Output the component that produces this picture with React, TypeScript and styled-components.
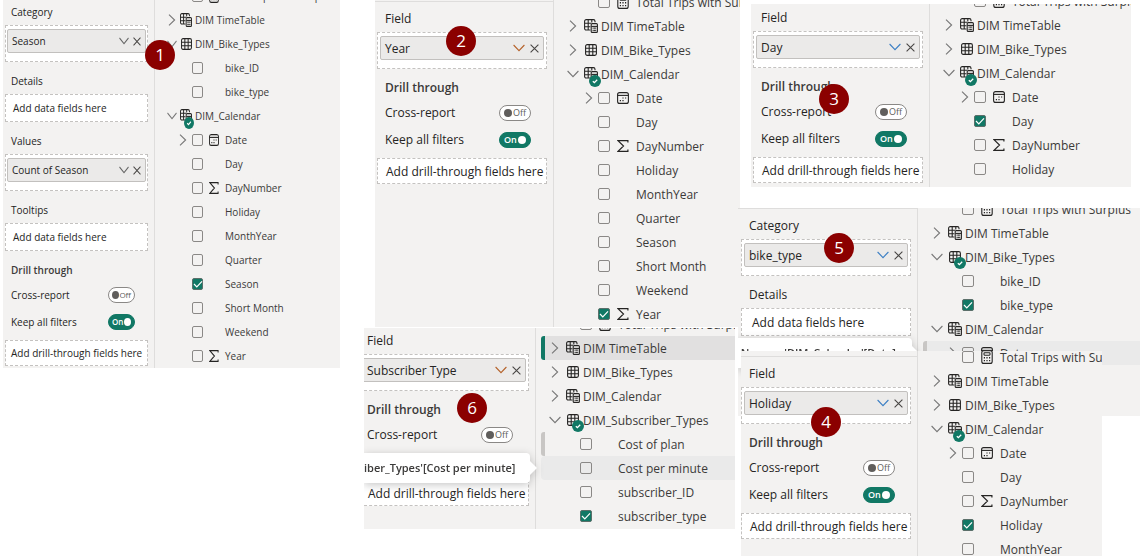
import React, { useId, useState } from "react";
import styled, { createGlobalStyle, css } from "styled-components";

const GlobalStyle = createGlobalStyle`
  * { box-sizing: border-box; }
  body { margin: 0; background: #fff; overflow: hidden; }
  input, button { font: inherit; margin: 0; padding: 0; }
`;

const ink = "#252423";
const green = "#117865";
const sans = `"Open Sans", "Noto Sans", sans-serif`;

/* ---------- board ---------- */

const Board = styled.main`
  position: relative;
  min-height: 100vh;
  overflow: hidden;
  font-family: ${sans};
  color: ${ink};
`;

const Snippet = styled.section<{ $x: number; $y: number; $w: number; $h: number; $compact?: boolean }>`
  position: absolute;
  left: ${(p) => p.$x}px;
  top: ${(p) => p.$y}px;
  width: ${(p) => p.$w}px;
  height: ${(p) => p.$h}px;
  display: flex;
  overflow: hidden;
  background: #f3f2f1;
  font-size: ${(p) => (p.$compact ? 10 : 12)}px;
`;

const Backing = styled.div`
  position: absolute;
  left: 364px;
  top: 327px;
  width: 374px;
  height: 202px;
  background: #fff;
`;

const Badge = styled.span<{ $x: number; $y: number }>`
  position: absolute;
  left: ${(p) => p.$x}px;
  top: ${(p) => p.$y}px;
  width: 30px;
  height: 30px;
  border-radius: 50%;
  background: #8b0000;
  color: #fff;
  font: 17px/29px ${sans};
  text-align: center;
`;

/* ---------- wells pane ---------- */

const WellsPane = styled.div<{ $w: number }>`
  flex: none;
  display: flex;
  justify-content: flex-end;
  align-items: flex-start;
  width: ${(p) => p.$w}px;
  overflow: hidden;
  border-right: 1px solid #dedddc;
`;

const Wells = styled.div<{ $shift: number; $compact?: boolean }>`
  flex: none;
  width: ${(p) => (p.$compact ? 151 : 179)}px;
  margin-top: ${(p) => p.$shift}px;
  padding: 7px 6px 0 ${(p) => (p.$compact ? 2 : 3)}px;
  border-top: 1px solid #dedddc;
`;

const Group = styled.div`
  margin-bottom: 9px;
`;

const Heading = styled.h3<{ $strong?: boolean; $compact?: boolean }>`
  margin: 0 0 ${(p) => (p.$strong ? 1 : 3)}px;
  padding-left: ${(p) => (p.$compact ? 6 : 8)}px;
  font-size: inherit;
  line-height: 20px;
  font-weight: ${(p) => (p.$strong ? 600 : 400)};
  color: ${(p) => (p.$strong ? "#3b3a39" : ink)};
`;

const DropZone = styled.div<{ $kind: "filled" | "data" | "drill"; $compact?: boolean }>`
  height: ${(p) => ({ filled: 37, data: 28, drill: 26 })[p.$kind]}px;
  border: 1px dashed #c4c2c0;
  background: #fff;
  white-space: nowrap;
  ${(p) =>
    p.$kind === "filled"
      ? css`
          padding: 3px ${p.$compact ? 1 : 2}px;
        `
      : css`
          padding-left: ${p.$kind === "data" ? (p.$compact ? 7 : 10) : p.$compact ? 5 : 8}px;
          line-height: ${(p.$kind === "data" ? 28 : 26) - (p.$compact ? 2 : 0)}px;
        `}
`;

const Chip = styled.div`
  display: flex;
  align-items: center;
  height: 24px;
  padding: 0 2px 0 4px;
  border: 1px solid #c2c0be;
  border-radius: 2px;
  background: #ebeae9;
`;

const ChipName = styled.span`
  flex: 1;
`;

const IconButton = styled.button<{ $w: number }>`
  display: grid;
  place-items: center;
  width: ${(p) => p.$w}px;
  height: 20px;
  border: 0;
  background: none;
  color: #555;
`;

const ToggleRow = styled.label<{ $compact?: boolean }>`
  display: flex;
  align-items: center;
  justify-content: space-between;
  height: 27px;
  padding: 0 ${(p) => (p.$compact ? 13 : 16)}px 0 ${(p) => (p.$compact ? 6 : 8)}px;
`;

const Track = styled.span<{ $on: boolean; $compact?: boolean }>`
  display: flex;
  flex-direction: ${(p) => (p.$on ? "row-reverse" : "row")};
  align-items: center;
  justify-content: space-between;
  width: ${(p) => (p.$compact ? 27 : 32)}px;
  height: 16px;
  padding: 0 ${(p) => (p.$compact ? 3 : 4)}px;
  border: 1px solid ${(p) => (p.$on ? green : "#8a8886")};
  border-radius: 8px;
  background: ${(p) => (p.$on ? green : "#fff")};
  color: ${(p) => (p.$on ? "#fff" : "#605e5c")};
  font-size: ${(p) => (p.$compact ? 8 : 9)}px;
  font-weight: ${(p) => (p.$on ? 600 : 400)};
  line-height: 14px;
`;

const Knob = styled.input<{ $compact?: boolean }>`
  appearance: none;
  width: ${(p) => (p.$compact ? 7 : 8)}px;
  height: 8px;
  border-radius: 50%;
  background: #605e5c;
  &:checked { background: #fff; }
`;

const DrillGap = styled.div`
  padding-top: 5px;
`;

/* ---------- field tree ---------- */

const Tree = styled.ul<{ $shift: number }>`
  flex: 1;
  min-width: 0;
  margin: ${(p) => p.$shift}px 0 0;
  padding: 0 0 0 5px;
  list-style: none;
`;

const Row = styled.li<{ $look?: Look }>`
  display: flex;
  align-items: center;
  height: 24px;
  white-space: nowrap;
  border-left: 4px solid transparent;
  ${(p) => p.$look === "selected" && css`background: #e1e0e0; border-left-color: ${green}; border-radius: 3px 0 0 3px;`}
  ${(p) => p.$look === "hover" && css`background: #eaeaea; border-left-color: #eaeaea; border-radius: 4px 0 0 4px;`}
  ${(p) => p.$look === "marked" && css`border-left-color: #c8c6c4; border-radius: 3px 0 0 3px;`}
  ${(p) => p.$look === "markedHover" && css`background: #eaeaea; border-left-color: #c8c6c4; border-radius: 3px 0 0 3px;`}
`;

const Slot = styled.span<{ $w: number }>`
  flex: none;
  display: flex;
  align-items: center;
  justify-content: center;
  width: ${(p) => p.$w}px;
  height: 24px;
`;

const ChildArrow = styled.span`
  display: flex;
  flex: 1;
  justify-content: flex-end;
  padding-right: 5px;
`;

const TickCell = styled.span<{ $w: number }>`
  flex: none;
  display: grid;
  place-items: center;
  width: ${(p) => p.$w}px;
  > * { grid-area: 1 / 1; }
  svg { pointer-events: none; }
`;

const Tick = styled.input<{ $w: number }>`
  appearance: none;
  width: ${(p) => p.$w}px;
  height: 12px;
  border: 1px solid #8a8886;
  border-radius: 2px;
  &:checked { background: ${green}; border-color: #5b6f6a; }
`;

const Name = styled.label<{ $gap: number }>`
  padding-left: ${(p) => p.$gap}px;
  color: #3b3a39;
`;

const TableIconBox = styled.span`
  position: relative;
  display: flex;
`;

const Verified = styled.svg<{ $compact?: boolean }>`
  position: absolute;
  left: ${(p) => (p.$compact ? 4 : 5)}px;
  bottom: -6px;
`;

/* ---------- tooltip ---------- */

const Tip = styled.div<{ $top: number; $w: number }>`
  position: absolute;
  left: 0;
  top: ${(p) => p.$top}px;
  width: ${(p) => p.$w}px;
  height: 30px;
  border-radius: 0 4px 4px 0;
  background: #fff;
  font-size: 11px;
  font-weight: 600;
  line-height: 30px;
  white-space: pre;
  color: #3b3a39;
  filter: drop-shadow(0 2px 4px rgba(0, 0, 0, 0.22));
  &::after {
    content: "";
    position: absolute;
    left: 100%;
    top: 8px;
    border: 7px solid transparent;
    border-left-color: #fff;
    border-right-width: 0;
  }
`;

/* ---------- icons ---------- */

const Right = () => (
  <svg width="8" height="12" viewBox="0 0 8 12" fill="none" stroke="#777" strokeWidth="1.1">
    <path d="M1 .6 6.6 6 1 11.4" />
  </svg>
);
const Down = ({ tint = "#777", compact }: { tint?: string; compact?: boolean }) => (
  <svg width={compact ? 10 : 12} height="8" viewBox="0 0 12 8" preserveAspectRatio="none" fill="none" stroke={tint} strokeWidth="1.1">
    <path d="M.6 1 6 6.6 11.4 1" />
  </svg>
);
const Cross = ({ compact }: { compact?: boolean }) => (
  <svg width={compact ? 8 : 9} height="9" viewBox="0 0 9 9" preserveAspectRatio="none" fill="none" stroke="#484644" strokeWidth="1.1">
    <path d="M.6.6l7.8 7.8M8.4.6.6 8.4" />
  </svg>
);
const TableGrid = ({ w }: { w: number }) => (
  <svg width={w} height="12" viewBox="0 0 12 12" preserveAspectRatio="none" fill="none" stroke={ink} strokeWidth="1.1">
    <rect x=".6" y=".6" width="10.8" height="10.8" rx="1.6" />
    <path d="M4.2.6v10.8M7.8.6v10.8M.6 4.2h10.8M.6 7.8h10.8" />
  </svg>
);
const TableCalc = ({ w }: { w: number }) => (
  <svg width={w} height="14" viewBox="0 0 14 14" preserveAspectRatio="none" fill="none" stroke={ink} strokeWidth="1.1">
    <path d="M6.4 11H2.2A1.6 1.6 0 0 1 .6 9.4V2.2A1.6 1.6 0 0 1 2.2.6h7.2A1.6 1.6 0 0 1 11 2.2v1M4.2.6V11M7.8.6v2.8M.6 4.2H7M.6 7.8h5.8" />
    <rect x="7.2" y="4.6" width="6.2" height="8.8" rx="1" fill="#f3f2f1" />
    <path d="M7.4 7.4h6" />
    <path d="M8.6 9.2h1M9.9 9.2h1M11.2 9.2h1M8.6 11.4h1M9.9 11.4h1M11.2 11.4h1" strokeWidth="1.2" />
  </svg>
);
const CheckDisc = ({ compact }: { compact?: boolean }) => (
  <Verified $compact={compact} width={compact ? 10 : 12} height="12" viewBox="0 0 12 12" preserveAspectRatio="none">
    <circle cx="6" cy="6" r="6" fill={green} />
    <path d="M3.8 6.2 5.4 7.6 8.2 4.8" fill="none" stroke="#fff" strokeWidth="1.3" />
  </Verified>
);
const DateIcon = ({ w }: { w: number }) => (
  <svg width={w} height="12" viewBox="0 0 12 12" preserveAspectRatio="none" fill="none" stroke={ink} strokeWidth="1.1">
    <rect x=".6" y=".6" width="10.8" height="10.8" rx="2" />
    <path d="M.6 3.4h10.8" />
    <path d="M5.4 6h1.2M8 6h1.2M2.8 8.6H4M5.4 8.6h1.2" strokeWidth="1.2" />
  </svg>
);
const CalcIcon = ({ w }: { w: number }) => (
  <svg width={w} height="14" viewBox="0 0 12 14" preserveAspectRatio="none" fill="none" stroke={ink} strokeWidth="1.1">
    <rect x=".8" y=".6" width="10.4" height="12.8" rx="2" />
    <rect x="3" y="2.8" width="6" height="2.4" rx=".6" />
    <path d="M2.8 7.8H4M5.4 7.8h1.2M8 7.8h1.2M2.8 10.6H4M5.4 10.6h1.2M8 10.6h1.2" strokeWidth="1.4" />
  </svg>
);
const Sigma = ({ w }: { w: number }) => (
  <svg width={w} height="12" viewBox="0 0 11 12" preserveAspectRatio="none" fill="none" stroke={ink} strokeWidth="1.1">
    <path d="M10 2.4V.6H.9L6 6 .9 11.4H10V9.6" />
  </svg>
);
const TickMark = () => (
  <svg width="10" height="8" viewBox="0 0 10 8" fill="none" stroke="#fff" strokeWidth="1.2">
    <path d="M1 4 3.8 6.8 9 1.4" />
  </svg>
);

/* ---------- data ---------- */

type Look = "selected" | "hover" | "marked" | "markedHover";
type Item = {
  name: string;
  table?: "grid" | "calc";
  open?: boolean;
  used?: boolean;
  icon?: "date" | "sum" | "calc";
  expands?: boolean;
  checked?: boolean;
  look?: Look;
};
type Entry =
  | { kind: "field"; title: string; value: string }
  | { kind: "empty"; title: string }
  | { kind: "drill" };

const total: Item = { name: "Total Trips with Surplus", icon: "calc" };
const timeTable: Item = { name: "DIM TimeTable", table: "calc" };
const bikeTypes: Item = { name: "DIM_Bike_Types", table: "grid" };
const calendar: Item = { name: "DIM_Calendar", table: "calc", open: true, used: true };
const dateField: Item = { name: "Date", icon: "date", expands: true };

const fields = (names: string[], picked?: string): Item[] =>
  names.map((name) => ({
    name,
    icon: name === "DayNumber" || name === "Year" ? "sum" : undefined,
    checked: name === picked,
  }));

const calendarFields = ["Day", "DayNumber", "Holiday", "MonthYear", "Quarter", "Season", "Short Month", "Weekend", "Year"];

/* ---------- parts ---------- */

function Toggle({ label, initial, compact }: { label: string; initial: boolean; compact?: boolean }) {
  const [on, setOn] = useState(initial);
  return (
    <ToggleRow $compact={compact}>
      {label}
      <Track $on={on} $compact={compact}>
        <Knob type="checkbox" role="switch" aria-label={label} checked={on} onChange={() => setOn(!on)} $compact={compact} />
        {on ? "On" : "Off"}
      </Track>
    </ToggleRow>
  );
}

function WellsList({ entries, width, shift, tint, compact }: { entries: Entry[]; width: number; shift: number; tint: string; compact?: boolean }) {
  return (
    <WellsPane $w={width}>
      <Wells $shift={shift} $compact={compact}>
        {entries.map((e, i) =>
          e.kind === "drill" ? (
            <div key={i}>
              <Heading $strong $compact={compact}>Drill through</Heading>
              <Toggle label="Cross-report" initial={false} compact={compact} />
              <Toggle label="Keep all filters" initial compact={compact} />
              <DrillGap>
                <DropZone $kind="drill" $compact={compact}>Add drill-through fields here</DropZone>
              </DrillGap>
            </div>
          ) : (
            <Group key={i}>
              <Heading $compact={compact}>{e.title}</Heading>
              {e.kind === "field" ? (
                <DropZone $kind="filled" $compact={compact}>
                  <Chip>
                    <ChipName>{e.value}</ChipName>
                    <IconButton $w={compact ? 14 : 16} aria-label={`${e.value} options`}>
                      <Down tint={tint} compact={compact} />
                    </IconButton>
                    <IconButton $w={compact ? 12 : 14} aria-label={`Remove ${e.value}`}>
                      <Cross compact={compact} />
                    </IconButton>
                  </Chip>
                </DropZone>
              ) : (
                <DropZone $kind="data" $compact={compact}>Add data fields here</DropZone>
              )}
            </Group>
          )
        )}
      </Wells>
    </WellsPane>
  );
}

function TreeRow({ item, compact }: { item: Item; compact?: boolean }) {
  const id = useId();
  const [checked, setChecked] = useState(!!item.checked);
  if (item.table) {
    const w = item.table === "grid" ? (compact ? 11 : 12) : compact ? 12 : 14;
    return (
      <Row $look={item.look}>
        <Slot $w={compact ? 15 : 20}>{item.open ? <Down compact={compact} /> : <Right />}</Slot>
        <Slot $w={compact ? 14 : 16}>
          <TableIconBox>
            {item.table === "grid" ? <TableGrid w={w} /> : <TableCalc w={w} />}
            {item.used && <CheckDisc compact={compact} />}
          </TableIconBox>
        </Slot>
        <Name as="span" $gap={2}>{item.name}</Name>
      </Row>
    );
  }
  const iw = compact ? 10 : 12;
  return (
    <Row $look={item.look}>
      <Slot $w={compact ? 28 : 35}>{item.expands && <ChildArrow><Right /></ChildArrow>}</Slot>
      <TickCell $w={compact ? 11 : 12}>
        <Tick id={id} type="checkbox" $w={compact ? 11 : 12} checked={checked} onChange={() => setChecked(!checked)} />
        {checked && <TickMark />}
      </TickCell>
      <Slot $w={compact ? 22 : 26}>
        {item.icon === "date" && <DateIcon w={iw} />}
        {item.icon === "sum" && <Sigma w={iw} />}
        {item.icon === "calc" && <CalcIcon w={iw} />}
      </Slot>
      <Name htmlFor={id} $gap={0}>{item.name}</Name>
    </Row>
  );
}

function FieldTree({ items, shift, compact }: { items: Item[]; shift: number; compact?: boolean }) {
  return (
    <Tree $shift={shift}>
      {items.map((item) => (
        <TreeRow key={item.name} item={item} compact={compact} />
      ))}
    </Tree>
  );
}

const fieldAndDrill = (value: string): Entry[] => [{ kind: "field", title: "Field", value }, { kind: "drill" }];

export default function App() {
  return (
    <>
      <GlobalStyle />
      <Board>
        <Snippet $x={3} $y={0} $w={337} $h={368} $compact>
          <WellsList
            compact
            width={152}
            shift={-6}
            tint="#666"
            entries={[
              { kind: "field", title: "Category", value: "Season" },
              { kind: "empty", title: "Details" },
              { kind: "field", title: "Values", value: "Count of Season" },
              { kind: "empty", title: "Tooltips" },
              { kind: "drill" },
            ]}
          />
          <FieldTree
            compact
            shift={-16}
            items={[total, timeTable, { ...bikeTypes, open: true }, ...fields(["bike_ID", "bike_type"]), calendar, dateField, ...fields(calendarFields, "Season")]}
          />
        </Snippet>

        <Snippet $x={375} $y={0} $w={365} $h={327}>
          <WellsList width={179} shift={1} tint="#b5622a" entries={fieldAndDrill("Year")} />
          <FieldTree shift={-10} items={[total, timeTable, bikeTypes, calendar, dateField, ...fields(calendarFields, "Year")]} />
        </Snippet>

        <Snippet $x={751} $y={4} $w={380} $h={183}>
          <WellsList width={179} shift={-4} tint="#3b7fc4" entries={fieldAndDrill("Day")} />
          <FieldTree shift={-15} items={[total, timeTable, bikeTypes, calendar, dateField, ...fields(calendarFields.slice(0, 3), "Day")]} />
        </Snippet>

        <Backing />
        <Snippet $x={364} $y={328} $w={371} $h={201}>
          <WellsList width={172} shift={-5} tint="#b5622a" entries={fieldAndDrill("Subscriber Type")} />
          <FieldTree
            shift={-16}
            items={[
              total,
              { ...timeTable, look: "selected" },
              bikeTypes,
              { ...calendar, open: false, used: false },
              { name: "DIM_Subscriber_Types", table: "grid", open: true, used: true },
              { name: "Cost of plan", look: "marked" },
              { name: "Cost per minute", look: "hover" },
              { name: "subscriber_ID" },
              { name: "subscriber_type", checked: true },
            ]}
          />
          <Tip role="tooltip" $top={125} $w={166}>iber_Types'[Cost per minute]</Tip>
        </Snippet>

        <Snippet $x={738} $y={208} $w={402} $h={208}>
          <WellsList
            width={180}
            shift={0}
            tint="#3b7fc4"
            entries={[
              { kind: "field", title: "Category", value: "bike_type" },
              { kind: "empty", title: "Details" },
            ]}
          />
          <FieldTree
            shift={-11}
            items={[
              total,
              timeTable,
              { ...bikeTypes, open: true, used: true },
              ...fields(["bike_ID", "bike_type"], "bike_type"),
              { ...calendar, used: false },
              { ...dateField, look: "markedHover" },
            ]}
          />
          <Tip role="tooltip" $top={130} $w={174}>{" Name:   'DIM_Calendar'[Date]"}</Tip>
        </Snippet>

        <Snippet $x={741} $y={351} $w={361} $h={205}>
          <WellsList width={177} shift={5} tint="#3b7fc4" entries={fieldAndDrill("Holiday")} />
          <FieldTree shift={-6} items={[total, timeTable, bikeTypes, calendar, dateField, ...fields(calendarFields.slice(0, 4), "Holiday")]} />
        </Snippet>

        <Badge $x={145} $y={40}>1</Badge>
        <Badge $x={446} $y={26}>2</Badge>
        <Badge $x={819} $y={84}>3</Badge>
        <Badge $x={811} $y={407}>4</Badge>
        <Badge $x={824} $y={233}>5</Badge>
        <Badge $x={457} $y={393}>6</Badge>
      </Board>
    </>
  );
}
